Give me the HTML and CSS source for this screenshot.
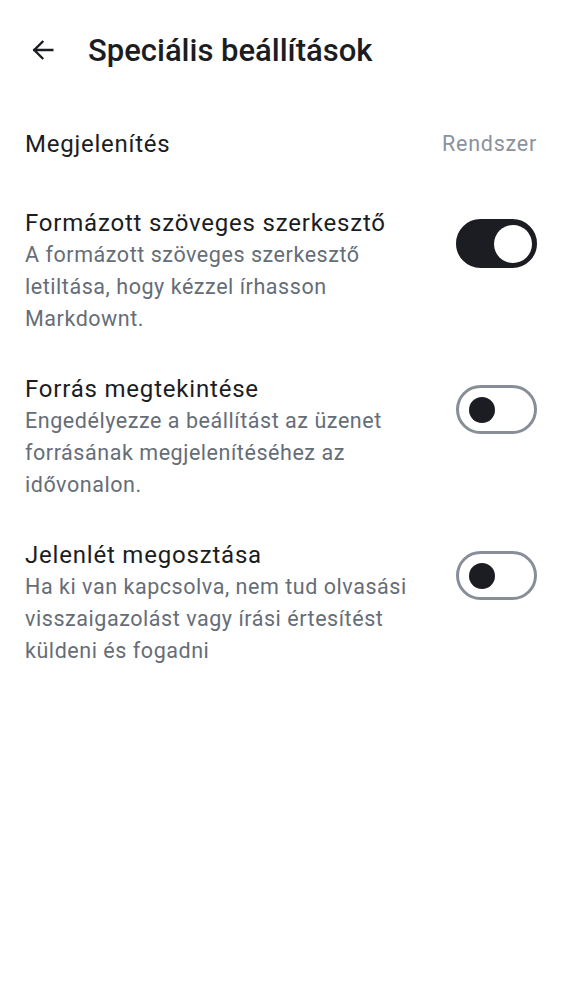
FILE: index.html
```html
<!DOCTYPE html>
<html lang="hu">
<head>
<meta charset="utf-8">
<link rel="stylesheet" href="styles.css">
</head>
<body>
<header class="topbar">
  <svg class="back" width="28" height="28" viewBox="0 0 24 24"><path d="M20 12H4.5M11.5 5L4.5 12l7 7" fill="none" stroke="#1b1d22" stroke-width="2" stroke-linecap="square"/></svg>
  <h1 class="title">Speciális beállítások</h1>
</header>
<main class="list">
  <div class="pref">
    <span class="pref-title">Megjelenítés</span>
    <span class="pref-value">Rendszer</span>
  </div>
  <div class="item">
    <div class="text">
      <div class="item-title">Formázott szöveges szerkesztő</div>
      <div class="item-desc">A formázott szöveges szerkesztő letiltása, hogy kézzel írhasson Markdownt.</div>
    </div>
    <div class="switch on"><span class="knob"></span></div>
  </div>
  <div class="item">
    <div class="text">
      <div class="item-title">Forrás megtekintése</div>
      <div class="item-desc">Engedélyezze a beállítást az üzenet forrásának megjelenítéséhez az idővonalon.</div>
    </div>
    <div class="switch"><span class="knob"></span></div>
  </div>
  <div class="item">
    <div class="text">
      <div class="item-title">Jelenlét megosztása</div>
      <div class="item-desc">Ha ki van kapcsolva, nem tud olvasási visszaigazolást vagy írási értesítést küldeni és fogadni</div>
    </div>
    <div class="switch"><span class="knob"></span></div>
  </div>
</main>
</body>
</html>
```
FILE: styles.css
```css
* { box-sizing: border-box; }
html, body { margin: 0; padding: 0; background: #fff; }
body { font-family: Roboto, "Noto Sans", sans-serif; color: #1b1d22; width: 562px; }
.topbar { height: 100px; display: flex; align-items: center; padding-left: 29px; }
.back { display: block; margin-right: 31px; }
.title { margin: 0; font-family: Roboto, "Noto Sans", sans-serif; font-weight: 500; font-size: 31px; letter-spacing: 0; color: #1b1d22; }
.list { padding: 0 25px; margin-top: 28px; }
.pref { display: flex; justify-content: space-between; align-items: center; height: 32px; margin-bottom: 47px; }
.pref-title { font-size: 24px; letter-spacing: 0.75px; line-height: 32px; }
.pref-value { font-size: 21.5px; letter-spacing: 0.75px; line-height: 32px; color: #8a929c; }
.item { display: flex; align-items: flex-start; margin-bottom: 38px; }
.text { flex: 1; padding-right: 28px; }
.item-title { font-size: 24px; letter-spacing: 0.8px; line-height: 32px; color: #1b1d22; }
.item-desc { font-size: 21.5px; line-height: 32px; color: #656d77; letter-spacing: 0.55px; }
.switch { flex: none; width: 81px; height: 49px; margin-top: 12px; border-radius: 25px; border: 3px solid #878e98; display: flex; align-items: center; padding-left: 10px; }
.switch .knob { width: 26px; height: 26px; border-radius: 50%; background: #1b1d22; }
.switch.on { background: #1b1d22; border-color: #1b1d22; justify-content: flex-end; padding-left: 0; padding-right: 2px; }
.switch.on .knob { width: 38px; height: 38px; background: #fff; }
```
